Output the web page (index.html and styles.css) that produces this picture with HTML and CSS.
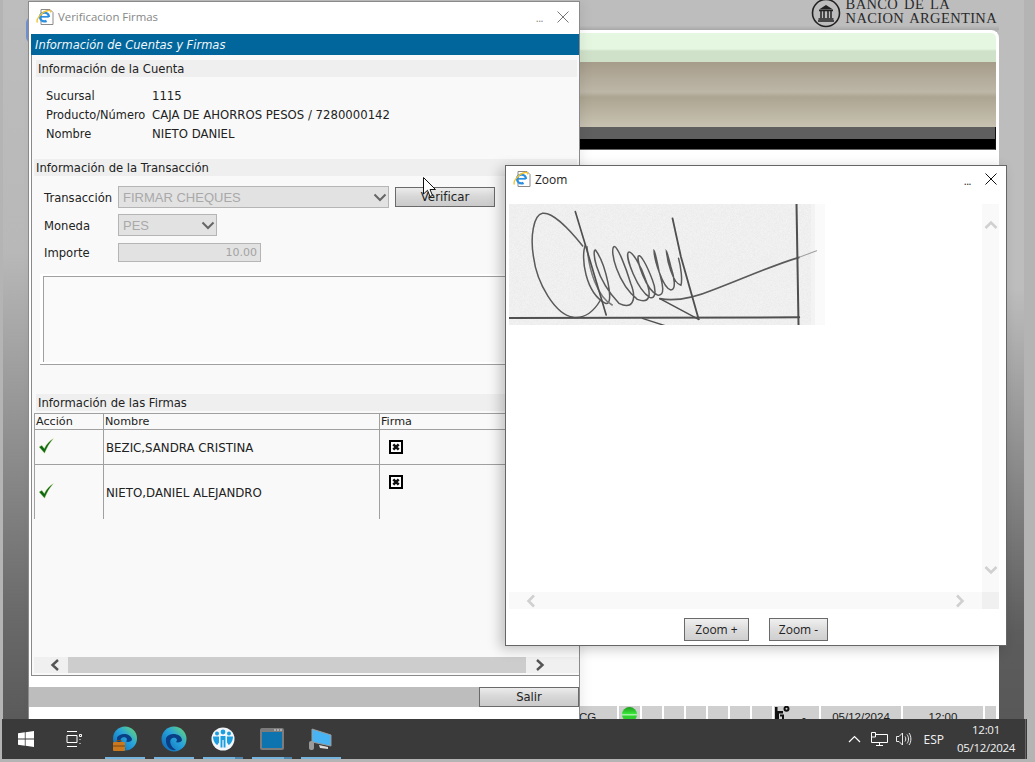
FILE: index.html
```html
<!DOCTYPE html>
<html lang="es">
<head>
    <meta charset="UTF-8">
    <title>Verificacion Firmas</title>
    <link rel="stylesheet" href="styles.css">
</head>
<body>

<div class="desktop">

    <div class="side-strip"></div>
    <div class="right-strip"></div>
    <div class="blue-tab"></div>

    <!-- aplicacion de fondo -->
    <div class="app">
        <div class="bank-logo">
            <svg class="bank-mark" width="30" height="30" viewBox="0 0 30 30">
                <circle cx="15" cy="15" r="13.5" fill="none" stroke="#222" stroke-width="1.6"/>
                <path d="M8 11.5 L15 7 L22 11.5 Z" fill="#222"/>
                <path d="M8 12.5H22M10 13V20M13 13V20M17 13V20M20 13V20M7.5 21H22.5M7 23H23" stroke="#222" stroke-width="1.5" fill="none"/>
            </svg>
            <div class="bank-name">BANCO DE LA<br>NACION ARGENTINA</div>
        </div>
        <div class="banner">
            <div class="banner-green"></div>
            <div class="banner-tan"></div>
            <div class="banner-gray"></div>
            <div class="banner-black"></div>
        </div>
        <div class="app-body"></div>
        <div class="status-bar">
            <div class="cell cell-cg">CG</div>
            <div class="cell cell-led"><span class="led"></span></div>
            <div class="cell cell-s"></div>
            <div class="cell cell-s"></div>
            <div class="cell cell-s"></div>
            <div class="cell cell-s"></div>
            <div class="cell cell-s"></div>
            <div class="cell cell-s"></div>
            <div class="cell cell-user">
                <svg width="16" height="14" viewBox="0 0 16 14"><circle cx="12.5" cy="2.8" r="2" fill="none" stroke="#111" stroke-width="2"/><path d="M1 1H3.5V5H9V7.5H5V13H1ZM6 8.5H10V13H8V10.5H6Z" fill="#111"/></svg>
                <span>-</span>
            </div>
            <div class="cell cell-date">05/12/2024</div>
            <div class="cell cell-date">12:00</div>
            <div class="cell cell-end"></div>
        </div>
    </div>

    <!-- ventana verificacion -->
    <div class="window win-firmas">
        <div class="title-bar title-dim">
            <svg class="ie-icon" width="18" height="18" viewBox="0 0 18 18">
                <path d="M5 1.5H14L17 4.5V16.5H5Z" fill="#fff" stroke="#8a8a8a"/>
                <circle cx="8.5" cy="9" r="4.4" fill="none" stroke="#2b8fe0" stroke-width="2.4" stroke-dasharray="23 4.6" stroke-dashoffset="-4.6"/>
                <path d="M4.5 8.8H12.8" stroke="#2b8fe0" stroke-width="1.7"/>
                <path d="M1.5 14.5C-.5 12 5 4 12 2.5C14 2 15 3 14.5 4.5" fill="none" stroke="#f2c230" stroke-width="1.3"/>
            </svg>
            <span class="title-text">Verificacion Firmas</span>
            <span class="title-dots">...</span>
            <svg class="title-close" width="12" height="12" viewBox="0 0 12 12"><path d="M.5 .5L11.5 11.5M11.5 .5L.5 11.5" stroke="#777" fill="none"/></svg>
        </div>

        <div class="blue-head">Información de Cuentas y Firmas</div>

        <div class="frame">
            <div class="section-head head-a">Información de la Cuenta</div>
            <div class="account">
                <span>Sucursal</span><span>1115</span>
                <span>Producto/Número</span><span>CAJA DE AHORROS PESOS / 7280000142</span>
                <span>Nombre</span><span>NIETO DANIEL</span>
            </div>

            <div class="section-head head-b">Información de la Transacción</div>
            <div class="tx-row tx-first">
                <span class="tx-label">Transacción</span>
                <div class="fake-select sel-long">
                    FIRMAR CHEQUES
                    <svg width="14" height="9" viewBox="0 0 14 9"><path d="M1.5 1.5L7 7L12.5 1.5" fill="none" stroke="#666" stroke-width="2"/></svg>
                </div>
                <button class="btn btn-verify">Verificar</button>
            </div>
            <div class="tx-row tx-second">
                <span class="tx-label">Moneda</span>
                <div class="fake-select sel-short">
                    PES
                    <svg width="14" height="9" viewBox="0 0 14 9"><path d="M1.5 1.5L7 7L12.5 1.5" fill="none" stroke="#666" stroke-width="2"/></svg>
                </div>
            </div>
            <div class="tx-row tx-third">
                <span class="tx-label">Importe</span>
                <div class="amount">10.00</div>
            </div>
            <div class="note"><div class="note-inner"></div></div>

            <div class="section-head head-c">Información de las Firmas</div>
            <table class="signers">
                <tr class="row-head">
                    <th class="col-action">Acción</th>
                    <th class="col-name">Nombre</th>
                    <th>Firma</th>
                </tr>
                <tr class="row-one">
                    <td class="cell-check">
                        <svg width="16" height="16" viewBox="0 0 16 16"><path d="M1 9L3.8 7.2L6.3 10.5C8.3 6.5 11 3 15.5 .5C11.5 5 8.7 10 6.6 15.3Z" fill="#0b6a12" stroke="#e3e8a0" stroke-width=".4"/></svg>
                    </td>
                    <td>BEZIC,SANDRA CRISTINA</td>
                    <td class="cell-firma">
                        <svg width="14" height="14" viewBox="0 0 14 14"><rect x="1" y="1" width="12" height="12" fill="#fff" stroke="#000" stroke-width="2"/><path d="M4.3 4.3L9.7 9.7M9.7 4.3L4.3 9.7" stroke="#111" stroke-width="2.6"/></svg>
                    </td>
                </tr>
                <tr class="row-two">
                    <td class="cell-check">
                        <svg width="16" height="16" viewBox="0 0 16 16"><path d="M1 9L3.8 7.2L6.3 10.5C8.3 6.5 11 3 15.5 .5C11.5 5 8.7 10 6.6 15.3Z" fill="#0b6a12" stroke="#e3e8a0" stroke-width=".4"/></svg>
                    </td>
                    <td class="name-low">NIETO,DANIEL ALEJANDRO</td>
                    <td class="cell-firma">
                        <svg width="14" height="14" viewBox="0 0 14 14"><rect x="1" y="1" width="12" height="12" fill="#fff" stroke="#000" stroke-width="2"/><path d="M4.3 4.3L9.7 9.7M9.7 4.3L4.3 9.7" stroke="#111" stroke-width="2.6"/></svg>
                    </td>
                </tr>
            </table>

            <div class="hscroll">
                <div class="hscroll-btn">
                    <svg width="10" height="12" viewBox="0 0 10 12"><path d="M8 1L2.5 6L8 11" fill="none" stroke="#555" stroke-width="2.4"/></svg>
                </div>
                <div class="hscroll-thumb"></div>
                <div class="hscroll-btn">
                    <svg width="10" height="12" viewBox="0 0 10 12"><path d="M2 1L7.5 6L2 11" fill="none" stroke="#555" stroke-width="2.4"/></svg>
                </div>
            </div>
        </div>

        <div class="exit-bar"><button class="btn btn-exit">Salir</button></div>
    </div>

    <!-- ventana zoom -->
    <div class="window win-zoom">
        <div class="title-bar zoom-title">
            <svg class="ie-icon" width="18" height="18" viewBox="0 0 18 18">
                <path d="M5 1.5H14L17 4.5V16.5H5Z" fill="#fff" stroke="#8a8a8a"/>
                <circle cx="8.5" cy="9" r="4.4" fill="none" stroke="#2b8fe0" stroke-width="2.4" stroke-dasharray="23 4.6" stroke-dashoffset="-4.6"/>
                <path d="M4.5 8.8H12.8" stroke="#2b8fe0" stroke-width="1.7"/>
                <path d="M1.5 14.5C-.5 12 5 4 12 2.5C14 2 15 3 14.5 4.5" fill="none" stroke="#f2c230" stroke-width="1.3"/>
            </svg>
            <span class="title-text">Zoom</span>
            <span class="title-dots">...</span>
            <svg class="title-close" width="12" height="12" viewBox="0 0 12 12"><path d="M.5 .5L11.5 11.5M11.5 .5L.5 11.5" stroke="#111" fill="none"/></svg>
        </div>

        <div class="zoom-view">
            <div class="zoom-canvas">
                <svg class="signature" width="316" height="121" viewBox="12 12 943 363" preserveAspectRatio="none">
                    <defs>
                        <filter id="paper" x="0" y="0" width="100%" height="100%">
                            <feTurbulence type="fractalNoise" baseFrequency="1.1" numOctaves="2"/>
                            <feColorMatrix values="0 0 0 0 .6  0 0 0 0 .6  0 0 0 0 .6  0 0 0 .4 -.1"/>
                        </filter>
                        <filter id="scan"><feGaussianBlur stdDeviation=".9"/></filter>
                    </defs>
                    <rect x="12" y="12" width="943" height="363" fill="#f3f3f3"/>
                    <rect x="12" y="12" width="900" height="363" filter="url(#paper)"/>
                    <rect x="925" y="12" width="30" height="363" fill="#fafafa"/>
                    <g filter="url(#scan)">
                        <g fill="none" stroke="#5a5a5a" stroke-width="4.5" stroke-linecap="round">
                            <path d="M232 138C190 85 140 35 112 40C85 45 75 110 85 170C95 250 150 345 205 352C240 355 265 335 285 300"/>
                            <path d="M240 135C225 170 240 280 300 310C330 320 300 190 270 150C260 145 265 230 340 310C380 330 395 300 375 250C360 200 335 135 325 140C312 150 335 250 395 298C430 312 440 290 420 240C405 195 378 150 368 157C358 170 395 270 432 292C450 300 452 270 440 240C425 200 405 160 398 168C392 180 420 270 455 285C480 290 470 250 460 215C455 190 448 155 445 152C445 175 470 265 495 270C512 270 505 230 495 200C490 180 484 158 482 155C484 180 500 250 525 256C530 240 525 200 518 175"/>
                            <path d="M245 140C250 210 275 290 320 315" stroke="#777"/>
                            <path d="M462 296C510 305 560 295 620 270C720 232 800 195 878 172" stroke-width="5"/>
                            <path d="M878 172L930 152" stroke="#a0a0a0" stroke-width="3"/>
                        </g>
                        <g fill="none" stroke="#505050" stroke-linecap="round">
                            <path d="M210 35L240 135L302 345" stroke-width="5"/>
                            <path d="M500 55L525 170L578 358" stroke-width="5.5"/>
                            <path d="M462 296L578 358" stroke-width="4.5"/>
                            <path d="M870 12L876 375" stroke-width="6"/>
                            <path d="M12 354L878 352" stroke-width="6"/>
                            <path d="M410 355L480 378" stroke-width="4"/>
                        </g>
                    </g>
                </svg>
            </div>
            <div class="vscroll">
                <svg width="14" height="10" viewBox="0 0 14 10"><path d="M1.5 8L7 2.5L12.5 8" fill="none" stroke="#d0d0d0" stroke-width="2.6"/></svg>
                <svg width="14" height="10" viewBox="0 0 14 10"><path d="M1.5 2L7 7.5L12.5 2" fill="none" stroke="#d0d0d0" stroke-width="2.6"/></svg>
            </div>
        </div>
        <div class="zoom-hscroll">
            <svg width="10" height="14" viewBox="0 0 10 14"><path d="M8 1.5L2.5 7L8 12.5" fill="none" stroke="#d0d0d0" stroke-width="2.6"/></svg>
            <svg class="zoom-next" width="10" height="14" viewBox="0 0 10 14"><path d="M2 1.5L7.5 7L2 12.5" fill="none" stroke="#d0d0d0" stroke-width="2.6"/></svg>
            <span class="scroll-corner"></span>
        </div>
        <div class="zoom-buttons">
            <button class="btn btn-plus">Zoom +</button>
            <button class="btn btn-minus">Zoom -</button>
        </div>
    </div>

    <!-- cursor -->
    <svg class="cursor" width="13" height="21" viewBox="0 0 13 21"><path d="M.5 .5V17L4.5 13.3L7 19.5L9.5 18.5L7 12.5H12.5Z" fill="#fff" stroke="#111"/></svg>

    <!-- barra de tareas -->
    <div class="taskbar">
        <div class="tb-fixed">
            <svg width="16" height="16" viewBox="0 0 16 16"><path d="M0 2.3L6.8 1.3V7.5H0ZM7.6 1.2L16 0V7.5H7.6ZM0 8.4H6.8V14.7L0 13.7ZM7.6 8.4H16V16L7.6 14.8Z" fill="#fff"/></svg>
        </div>
        <div class="tb-fixed">
            <svg width="16" height="16" viewBox="0 0 16 16"><path d="M1 .5H11M1 15.5H11M1 4.5H11V11.5H1ZM13.5 3.5H15.5V5.5H13.5Z" fill="none" stroke="#fff"/><path d="M14 8V9M14 12V13" stroke="#fff"/></svg>
        </div>
        <div class="tb-apps">
            <div class="tb-app">
                <svg width="26" height="26" viewBox="0 0 26 26">
                    <defs><linearGradient id="edgeA" x1="0" y1="1" x2="1" y2="0"><stop offset="0" stop-color="#0c62b0"/><stop offset=".55" stop-color="#27a3dc"/><stop offset="1" stop-color="#6fdc6a"/></linearGradient></defs>
                    <circle cx="13" cy="12.5" r="12" fill="url(#edgeA)"/>
                    <path d="M5 11.5C8 6 19 7 20 13.5C20 15.5 16 16.5 14 15.5C17 12.5 12 9.5 9 12.5C7.5 15 9 20 14 23C9 24 4.5 19 5 11.5Z" fill="#0a3f86"/>
                    <rect x="1" y="16" width="12" height="9" rx="1" fill="#c9781e"/>
                    <path d="M1 20H13M5 16V14.5H9V16" stroke="#7b4510" fill="none"/>
                </svg>
            </div>
            <div class="tb-app">
                <svg width="26" height="26" viewBox="0 0 26 26">
                    <circle cx="13" cy="13" r="12.5" fill="url(#edgeA)"/>
                    <path d="M5 12C8 6 20 7 21 14C21 16 17 17 15 16C18 13 13 10 10 13C8 16 10 21 15 24C9 25 4 20 5 12Z" fill="#0a3f86"/>
                </svg>
            </div>
            <div class="tb-app tb-split">
                <svg width="24" height="24" viewBox="0 0 24 24">
                    <circle cx="12" cy="12" r="11.5" fill="#f2f6fa"/>
                    <g fill="#1c9fe0"><circle cx="12" cy="5" r="2.4"/><circle cx="6" cy="6.5" r="2"/><circle cx="18" cy="6.5" r="2"/><path d="M9.5 9H14.5V20.5H12.6V13H11.4V20.5H9.5Z"/><path d="M2 9.5H8V15.5L6.3 18C4 17 2 13 2 9.5ZM16 9.5H22C22 13 20 17 17.7 18L16 15.5Z"/></g>
                </svg>
            </div>
            <div class="tb-app tb-split">
                <svg width="24" height="22" viewBox="0 0 24 22"><rect x="0" y="0" width="24" height="22" rx="2" fill="#7c7c7c"/><rect x="2" y="4" width="20" height="16" fill="#0d74b0"/><path d="M14 2H22" stroke="#ddd" stroke-dasharray="2 1" fill="none"/></svg>
            </div>
            <div class="tb-app">
                <svg width="24" height="24" viewBox="0 0 24 24"><path d="M3 2L22 8V19L3 15Z" fill="#49b4f4" stroke="#9a9a9a"/><path d="M10 18L19 20V22L11 21Z" fill="#ddd"/><rect x="0" y="14" width="5" height="9" rx="2" fill="#9a9a9a"/></svg>
            </div>
        </div>
        <div class="tray">
            <svg class="tray-up" width="13" height="8" viewBox="0 0 13 8"><path d="M1 7L6.5 1.5L12 7" fill="none" stroke="#fff" stroke-width="1.2"/></svg>
            <svg class="tray-net" width="17" height="14" viewBox="0 0 17 14"><path d="M4.5 2.5H16.5V10.5H.5V.5H4.5V5H.5M8.5 10.5V13M5 13.5H12" fill="none" stroke="#fff"/></svg>
            <svg class="tray-vol" width="16" height="14" viewBox="0 0 16 14"><path d="M.5 4.5H3L6.5 1V13L3 9.5H.5ZM9 4.5C10 6 10 8 9 9.5M11 2.5C13 5 13 9 11 11.5M13 1C15.5 4 15.5 10 13 13" fill="none" stroke="#fff" stroke-width=".9"/></svg>
            <span class="tray-lang">ESP</span>
            <div class="clock"><span>12:01</span><span>05/12/2024</span></div>
            <span class="show-desktop"></span>
        </div>
    </div>

</div>

</body>
</html>
```

FILE: styles.css
```css
html, body {
    margin: 0;
    padding: 0;
}

body {
    font-family: "DejaVu Sans", sans-serif;
    font-size: 11.6px;
    color: #222;
}

.desktop {
    position: relative;
    width: 1035px;
    height: 762px;
    overflow: hidden;
    background: #b4b4b4;
}

.side-strip {
    position: absolute;
    left: 3px;
    top: 0;
    width: 26px;
    height: 720px;
    background: linear-gradient(180deg, #bdbdbd 0, #b8b8b8 35%, #6a6a6a 85%, #5a5a5a 100%);
}

.right-strip {
    position: absolute;
    left: 998px;
    top: 0;
    width: 26px;
    height: 720px;
    background: linear-gradient(180deg, #bdbdbd 0, #bdbdbd 40%, #5c5c5c 88%, #585858 100%);
}

.blue-tab {
    position: absolute;
    left: 26px;
    top: 17px;
    width: 6px;
    height: 26px;
    border-radius: 6px 0 0 6px;
    background: #6f90cf;
}

/* aplicacion de fondo */

.app {
    position: absolute;
    left: 28px;
    top: 0;
    width: 971px;
    height: 719px;
    display: flex;
    flex-direction: column;
}

.bank-logo {
    height: 30px;
    display: flex;
    justify-content: flex-end;
    align-items: center;
    gap: 4px;
    padding-right: 2px;
    box-sizing: border-box;
    overflow: hidden;
    background: linear-gradient(180deg, #bdbdbd 0, #bdbdbd 85%, #a8a8a8 100%);
}

.bank-mark {
    margin: -4px 1px 0 0;
}

.bank-name {
    font-family: "Liberation Serif", serif;
    font-size: 14.5px;
    line-height: 14px;
    color: #2a2a2a;
    letter-spacing: .35px;
    margin-top: -8px;
    word-spacing: 2px;
}

.banner {
    border-top: 3px solid #fff;
    border-right: 3px solid #fff;
    border-radius: 0 8px 0 0;
    overflow: hidden;
    background: #fff;
}

.banner-green {
    height: 29px;
    background: linear-gradient(180deg, #e6f7e1 0, #e6f7e1 55%, #d0e1c9 62%, #d0e1c9 100%);
}

.banner-tan {
    height: 65px;
    background: linear-gradient(180deg, #a69c8a 0, #bdb7a8 46%, #aca591 54%, #c8c2b2 100%);
}

.banner-gray {
    height: 12px;
    background: #5f5f5f;
    border-right: 1px solid #111;
}

.banner-black {
    height: 10px;
    background: #000;
    border-right: 1px solid #111;
    border-bottom: 1px solid #666;
}

.app-body {
    flex: 1;
    background: #fff;
}

.status-bar {
    height: 13px;
    background: #fff;
    display: flex;
    justify-content: flex-end;
    gap: 2px;
    padding-right: 3px;
    overflow: hidden;
}

.cell {
    background: #cfcfcf;
    height: 26px;
    line-height: 22px;
    font-family: "Liberation Sans", sans-serif;
    font-size: 11.5px;
    text-align: center;
    color: #222;
    flex: none;
}

.cell-cg {
    width: 38px;
    text-align: left;
}

.cell-led {
    width: 21px;
}

.led {
    display: block;
    width: 15px;
    height: 15px;
    margin: 1px auto 0;
    border-radius: 50%;
    background: linear-gradient(180deg, #1f9a1f 0, #37e837 45%, #c9f7c9 52%, #2ed12e 60%);
}

.cell-s {
    width: 20px;
}

.cell-user {
    width: 45px;
    display: flex;
    gap: 12px;
    align-items: flex-start;
}

.cell-date {
    width: 80px;
}

.cell-end {
    width: 11px;
}

/* ventanas */

.window {
    position: absolute;
    box-sizing: border-box;
    background: #fff;
    display: flex;
    flex-direction: column;
}

.win-firmas {
    left: 28px;
    top: 1px;
    width: 552px;
    height: 719px;
    border: 1px solid #8a8a8a;
    padding-left: 2px;
    box-shadow: 4px 0 10px rgba(0, 0, 0, .06);
}

.win-zoom {
    left: 505px;
    top: 165px;
    width: 502px;
    height: 481px;
    border: 1px solid #666;
    box-shadow: -5px 3px 12px rgba(0, 0, 0, .22);
    font-family: "Open Sans", sans-serif;
}

.title-bar {
    height: 32px;
    box-sizing: border-box;
    flex: none;
    display: flex;
    align-items: center;
    font-family: "Open Sans", sans-serif;
    font-size: 12px;
    padding: 0 10px 3px 5px;
}

.title-dim {
    color: #868686;
    font-size: 11.4px;
}

.zoom-title {
    height: 29px;
    padding-left: 7px;
    color: #222;
}

.ie-icon {
    margin-right: 4px;
}

.title-dots {
    margin-left: auto;
    margin-right: 14px;
    margin-top: 2px;
    font-size: 11px;
    letter-spacing: -.5px;
}

.zoom-title .title-close {
    margin-right: -1px;
}

/* contenido firmas */

.blue-head {
    height: 21px;
    line-height: 22px;
    padding-left: 4px;
    background: #00669b;
    color: #f2f7fa;
    font-style: italic;
    font-size: 11.5px;
    flex: none;
}

.frame {
    flex: none;
    box-sizing: border-box;
    height: 621px;
    border-left: 1px solid #8a8a8a;
    border-bottom: 1px solid #8a8a8a;
    background: #f9f9f9;
    display: flex;
    flex-direction: column;
    overflow: hidden;
}

.section-head {
    flex: none;
    height: 17px;
    line-height: 18px;
    background: #efefef;
    color: #222;
}

.head-a {
    margin: 5px 2px 0 4px;
    padding-left: 2px;
}

.head-b {
    margin: 16px 2px 0 2px;
    padding-left: 2px;
}

.head-c {
    margin: 29px 2px 0 4px;
    padding-left: 2px;
}

.account {
    display: grid;
    grid-template-columns: 106px 1fr;
    grid-auto-rows: 19px;
    align-items: center;
    margin: 9px 0 0 14px;
    font-size: 11.7px;
}

.account span:nth-child(odd) {
    font-size: 11.4px;
}

.tx-row {
    flex: none;
    display: flex;
    align-items: center;
    padding-left: 12px;
}

.tx-first {
    margin-top: 10px;
    height: 22px;
}

.tx-second {
    margin-top: 6px;
    height: 22px;
}

.tx-third {
    margin-top: 7px;
    height: 19px;
}

.tx-label {
    width: 74px;
    flex: none;
    padding-top: 2px;
}

.tx-third .tx-label {
    padding-top: 0;
}

.fake-select {
    box-sizing: border-box;
    height: 22px;
    display: flex;
    align-items: center;
    justify-content: space-between;
    padding: 0 1px 0 4px;
    border: 1px solid #b5b5b5;
    background: #e2e2e2;
    color: #a9a9a9;
    font-family: "Liberation Sans", sans-serif;
    font-size: 13px;
}

.sel-long {
    width: 271px;
}

.sel-short {
    width: 99px;
}

.amount {
    box-sizing: border-box;
    width: 143px;
    height: 19px;
    line-height: 18px;
    padding-right: 3px;
    text-align: right;
    border: 1px solid #b5b5b5;
    background: #e2e2e2;
    color: #a3a3a3;
    font-size: 11px;
}

.btn {
    box-sizing: border-box;
    border: 1px solid #6a6a6a;
    background: linear-gradient(180deg, #ececec 0, #d8d8d8 45%, #cacaca 100%);
    padding: 0;
    color: #222;
    font-family: "DejaVu Sans", sans-serif;
    font-size: 11.6px;
}

.btn-verify {
    width: 100px;
    height: 20px;
    margin-left: 6px;
    font-size: 11.8px;
}

.note {
    flex: none;
    margin: 12px 0 0 8px;
    padding: 2px 0 3px 3px;
    height: 91px;
    box-sizing: border-box;
    background: #fff;
    border-bottom: 1px solid #a0a0a0;
}

.note-inner {
    height: 100%;
    border-top: 1px solid #a0a0a0;
    border-left: 1px solid #a0a0a0;
    background: #fafafa;
}

.signers {
    flex: none;
    margin: 2px 0 0 2px;
    width: 540px;
    border-collapse: collapse;
    table-layout: fixed;
    font-size: 11.8px;
}

.signers th,
.signers td {
    padding: 1px 0 0 2px;
    border-left: 1px solid #a0a0a0;
    border-top: 1px solid #a0a0a0;
    text-align: left;
    font-weight: normal;
    color: #222;
}

.signers th {
    padding: 1px 0 0 1px;
    font-size: 11.2px;
    line-height: 14px;
}

.col-action {
    width: 67px;
}

.col-name {
    width: 274px;
}

.row-head {
    height: 16px;
}

.row-one {
    height: 35px;
}

.row-two {
    height: 54px;
}

.signers .name-low {
    padding-top: 3px;
}

.signers .cell-check {
    padding: 0 0 0 3px;
}

.cell-check svg {
    display: block;
    margin-top: -2px;
}

.signers .cell-firma {
    vertical-align: top;
    padding: 10px 0 0 9px;
}

.cell-firma svg {
    display: block;
}

.hscroll {
    flex: none;
    margin: auto 0 2px 2px;
    height: 16px;
    display: flex;
    background: #f0f0f0;
}

.hscroll-btn {
    width: 34px;
    display: flex;
    align-items: center;
    justify-content: center;
    padding-left: 8px;
    box-sizing: border-box;
}

.hscroll-btn:last-child {
    width: 53px;
    padding: 0 25px 0 0;
}

.hscroll-thumb {
    flex: 1;
    background: #cdcdcd;
}

.exit-bar {
    margin-top: 11px;
    margin-left: -2px;
    height: 20px;
    flex: none;
    display: flex;
    justify-content: flex-end;
    background: #bdbdbd;
}

.btn-exit {
    width: 100px;
    height: 20px;
}

/* contenido zoom */

.zoom-view {
    margin: 9px 7px 0 3px;
    height: 388px;
    flex: none;
    display: flex;
}

.zoom-canvas {
    flex: 1;
}

.signature {
    display: block;
}

.vscroll {
    width: 17px;
    background: #f9f9f9;
    display: flex;
    flex-direction: column;
    justify-content: space-between;
    align-items: center;
    padding: 16px 0 17px;
    box-sizing: border-box;
}

.zoom-hscroll {
    margin: 0 7px 0 3px;
    height: 17px;
    flex: none;
    display: flex;
    align-items: center;
    padding-left: 17px;
    background: #f9f9f9;
}

.zoom-next {
    margin-left: auto;
}

.scroll-corner {
    width: 17px;
    height: 17px;
    margin-left: 17px;
    background: #f0f0f0;
}

.zoom-buttons {
    display: flex;
    gap: 20px;
    padding: 9px 0 0 178px;
}

.zoom-buttons .btn {
    height: 23px;
    font-family: "Open Sans", sans-serif;
    font-size: 12px;
    background: linear-gradient(180deg, #f0f0f0 0, #dcdcdc 50%, #cfcfcf 100%);
}

.btn-plus {
    width: 65px;
}

.btn-minus {
    width: 59px;
}

.cursor {
    position: absolute;
    left: 423px;
    top: 177px;
}

/* barra de tareas */

.taskbar {
    position: absolute;
    left: 2px;
    top: 719px;
    width: 1025px;
    height: 40px;
    background: #3a3a3a;
    display: flex;
    align-items: center;
    color: #f2f2f2;
    font-family: "Open Sans", sans-serif;
    font-size: 12px;
}

.tb-fixed {
    width: 48px;
    height: 40px;
    display: flex;
    align-items: center;
    justify-content: center;
    flex: none;
}

.tb-apps {
    display: flex;
    gap: 9px;
    margin-left: 7px;
}

.tb-app {
    box-sizing: border-box;
    width: 40px;
    height: 40px;
    display: flex;
    align-items: center;
    justify-content: center;
    border-bottom: 2px solid #76b4e0;
    padding-top: 2px;
}

.tb-split {
    border-image: linear-gradient(90deg, #76b4e0 0, #76b4e0 78%, #4f86ad 78%, #4f86ad 100%) 1;
}

.tray {
    margin-left: auto;
    display: flex;
    align-items: center;
    height: 40px;
}

.tray-up {
    margin-right: 10px;
}

.tray-net {
    margin-right: 8px;
}

.tray-vol {
    margin-right: 12px;
}

.tray-lang {
    margin-right: 12px;
}

.clock {
    display: flex;
    flex-direction: column;
    align-items: center;
    width: 60px;
    line-height: 18px;
    font-size: 11.5px;
    letter-spacing: -.3px;
}

.show-desktop {
    width: 1px;
    height: 40px;
    margin: 0 1px 0 9px;
    background: #666;
}
```
